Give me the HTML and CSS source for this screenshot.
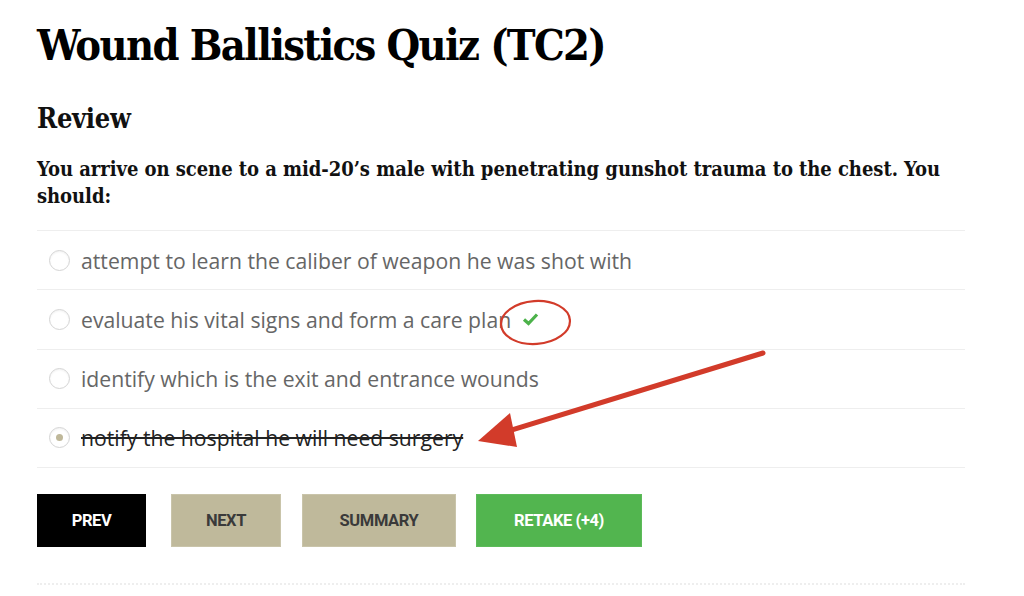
FILE: index.html
```html
<!DOCTYPE html>
<html>
<head>
<meta charset="utf-8">
<link rel="stylesheet" href="styles.css">
</head>
<body>
<div class="page">
  <h1 class="title">Wound Ballistics Quiz (TC2)</h1>
  <h2 class="subtitle">Review</h2>
  <p class="question">You arrive on scene to a mid-20’s male with penetrating gunshot trauma to the chest. You should:</p>
  <ul class="answers">
    <li class="answer"><span class="radio"></span><span class="label">attempt to learn the caliber of weapon he was shot with</span></li>
    <li class="answer"><span class="radio"></span><span class="label">evaluate his vital signs and form a care plan</span><svg class="check" viewBox="0 0 16 14" width="17" height="14"><path d="M1.5 7.5 L6 11.5 L14.5 2.5" fill="none" stroke="#4cb24a" stroke-width="3.2"/></svg></li>
    <li class="answer"><span class="radio"></span><span class="label">identify which is the exit and entrance wounds</span></li>
    <li class="answer"><span class="radio radio-on"></span><span class="label label-wrong">notify the hospital he will need surgery</span></li>
  </ul>
  <div class="buttons">
    <button class="btn btn-prev">PREV</button>
    <button class="btn btn-tan btn-next">NEXT</button>
    <button class="btn btn-tan btn-summary">SUMMARY</button>
    <button class="btn btn-green">RETAKE (+4)</button>
  </div>
  <div class="dotted"></div>
</div>
<svg class="annot" width="1024" height="596" viewBox="0 0 1024 596">
  <ellipse cx="535.5" cy="322.5" rx="34.5" ry="21.5" fill="none" stroke="#d23b2a" stroke-width="2.2" transform="rotate(-4 535.5 322.5)"/>
  <line x1="763" y1="353" x2="505" y2="432" stroke="#d23b2a" stroke-width="5" stroke-linecap="round"/>
  <polygon points="478,441 510,413 517,447" fill="#d23b2a"/>
</svg>
</body>
</html>
```

FILE: styles.css
```css
html, body {
  margin: 0;
  padding: 0;
  background: #ffffff;
}
.page {
  width: 928px;
  padding: 0 0 0 37px;
  display: flex;
  flex-direction: column;
}
.title {
  font-family: "DejaVu Serif", serif;
  font-stretch: condensed;
  font-weight: bold;
  font-size: 43px;
  line-height: 54px;
  margin: 18px 0 0 0;
  color: #000;
  letter-spacing: -1.65px;
}
.subtitle {
  font-family: "DejaVu Serif", serif;
  font-stretch: condensed;
  font-weight: bold;
  font-size: 27px;
  line-height: 32px;
  margin: 31px 0 0 0;
  color: #111;
  letter-spacing: -0.3px;
}
.question {
  font-family: "DejaVu Serif", serif;
  font-stretch: condensed;
  font-weight: bold;
  font-size: 20px;
  line-height: 27px;
  margin: 21px 0 0 0;
  width: 928px;
  color: #111;
  letter-spacing: -0.05px;
}
.answers {
  list-style: none;
  margin: 20px 0 0 0;
  padding: 0;
  border-top: 1px solid #eeeeee;
}
.answer {
  height: 58.25px;
  border-bottom: 1px solid #eeeeee;
  display: flex;
  align-items: center;
  font-family: "Open Sans", sans-serif;
  font-size: 21.2px;
  color: #666666;
}
.radio {
  width: 21px;
  height: 21px;
  box-sizing: border-box;
  border: 1px solid #d4d4d4;
  border-radius: 50%;
  margin: 0 11px 0 12px;
  display: flex;
  align-items: center;
  justify-content: center;
  box-shadow: inset 0 1px 2px rgba(0,0,0,0.06);
}
.radio-on::after {
  content: "";
  width: 7px;
  height: 7px;
  border-radius: 50%;
  background: #bfb89a;
}
.label-wrong {
  text-decoration: line-through;
  text-decoration-thickness: 1.5px;
  color: #222222;
}
.check {
  margin-left: 11px;
}
.buttons {
  display: flex;
  gap: 21px;
  margin-top: 26px;
}
.btn {
  height: 53px;
  border: 1px solid rgba(0,0,0,0.15);
  font-family: "Roboto", sans-serif;
  font-weight: bold;
  font-size: 16.5px;
  letter-spacing: -0.4px;
  padding: 0;
  cursor: pointer;
}
.btn-prev {
  width: 109px;
  background: #000;
  color: #fff;
}
.btn-tan {
  background: #bfb99b;
  color: #3a3a3a;
  border-color: #c9c4aa;
}
.btn-next {
  width: 110px;
  margin-left: 4px;
}
.btn-summary {
  width: 154px;
}
.btn-green {
  width: 166px;
  margin-left: -1px;
  background: #52b54f;
  color: #fff;
  border-color: #5dbb5a;
}
.dotted {
  margin-top: 36px;
  border-top: 2px dotted #eeeeee;
}
.annot {
  position: absolute;
  left: 0;
  top: 0;
  pointer-events: none;
}
```
